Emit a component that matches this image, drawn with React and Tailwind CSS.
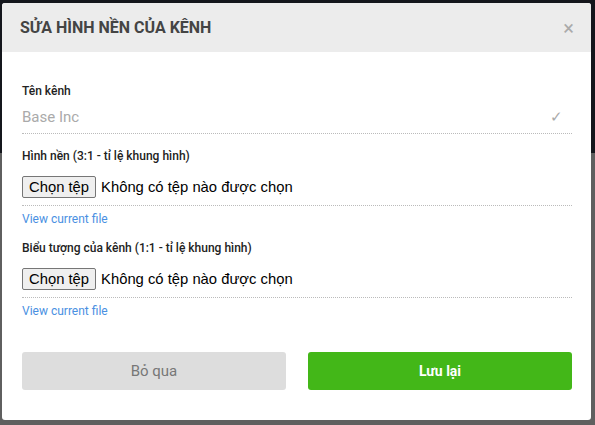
import React from 'react';

const FileField = ({ label }) => (
  <div>
    <div className="text-[12px] font-medium text-[#222] leading-none">{label}</div>
    <div className="mt-[14px] flex items-center pb-[7px] border-b border-dotted border-[#bbb]">
      <button
        type="button"
        className="h-[22px] px-[6px] border border-[#767676] rounded-[2px] bg-[#efefef] text-[14.8px] text-black leading-none"
        style={{ fontFamily: '"Liberation Sans", Arial, sans-serif' }}
      >
        Chọn tệp
      </button>
      <span
        className="ml-[5px] text-[14.8px] text-black leading-none"
        style={{ fontFamily: '"Liberation Sans", Arial, sans-serif' }}
      >
        Không có tệp nào được chọn
      </span>
    </div>
    <a href="#" className="block mt-[7px] text-[12px] text-[#4a90e2] leading-none">
      View current file
    </a>
  </div>
);

export default function App() {
  return (
    <div className="w-[595px] h-[425px] bg-[#5f5f5f] font-['Roboto',sans-serif] overflow-hidden relative">
      <div className="h-[153px] bg-[#14161c]" />
      <div className="absolute left-[2px] top-[3px] w-[589px] h-[417px] bg-white rounded-[3px] flex flex-col">
        <div className="h-[49px] bg-[#ececec] flex items-center justify-between pl-[18px] pr-[17px] rounded-t-[3px]">
          <h2 className="text-[16px] font-bold text-[#444]">SỬA HÌNH NỀN CỦA KÊNH</h2>
          <span className="text-[20px] text-[#aaa] leading-none">×</span>
        </div>
        <div className="pl-[20px] pr-[19px] pt-[33px]">
          <div className="text-[12px] font-medium text-[#222] leading-none">Tên kênh</div>
          <div className="mt-[13px] flex items-center justify-between pb-[8px] border-b border-dotted border-[#bbb]">
            <span className="text-[15px] text-[#aaa] leading-none">Base Inc</span>
            <span className="text-[15px] text-[#aaa] leading-none mr-[9px]">✓</span>
          </div>
          <div className="mt-[16px] flex flex-col gap-[17px]">
            <FileField label="Hình nền (3:1 - tỉ lệ khung hình)" />
            <FileField label="Biểu tượng của kênh (1:1 - tỉ lệ khung hình)" />
          </div>
          <div className="mt-[35px] flex gap-[22px]">
            <button className="flex-1 h-[38px] rounded-[3px] bg-[#dddddd] text-[15px] text-[#777]">Bỏ qua</button>
            <button className="flex-1 h-[38px] rounded-[3px] bg-[#43b718] text-[14px] font-bold text-white">Lưu lại</button>
          </div>
        </div>
      </div>
    </div>
  );
}
